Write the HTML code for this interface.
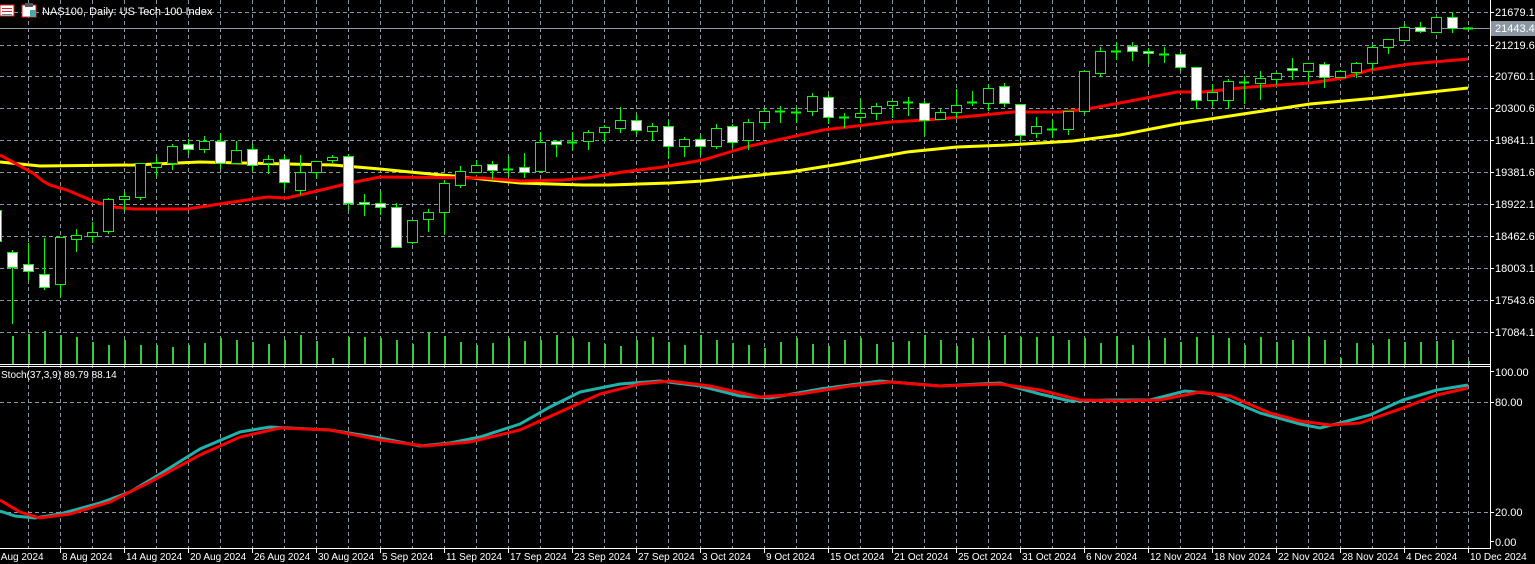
<!DOCTYPE html>
<html><head><meta charset="utf-8"><style>
html,body{margin:0;padding:0;background:#000;width:1535px;height:564px;overflow:hidden}
svg{display:block}
text{font-family:"Liberation Sans",sans-serif;font-size:11px;fill:#fff}
.d{font-size:10px}
</style></head><body>
<svg id="s" width="1535" height="564" xmlns="http://www.w3.org/2000/svg" shape-rendering="crispEdges">
<rect width="1535" height="564" fill="#000"/>
<g id="grid"></g>
<g id="vol"></g>
<line x1="0" y1="28.5" x2="1490" y2="28.5" stroke="#8c97a4" stroke-width="1"/>
<polyline id="yel" fill="none" stroke="#ffff00" stroke-width="3" shape-rendering="auto"/>
<polyline id="red" fill="none" stroke="#ff0000" stroke-width="3" shape-rendering="auto"/>
<g id="cdl"></g>
<polyline id="st1" fill="none" stroke="#20b2aa" stroke-width="3" shape-rendering="auto"/>
<polyline id="st2" fill="none" stroke="#ff0000" stroke-width="3" shape-rendering="auto"/>
<line x1="0" y1="364.5" x2="1490" y2="364.5" stroke="#fff"/>
<line x1="0" y1="366.5" x2="1490" y2="366.5" stroke="#fff"/>
<line x1="0" y1="548.5" x2="1490" y2="548.5" stroke="#fff"/>
<line x1="1490.5" y1="0" x2="1490.5" y2="549" stroke="#fff"/>
<g id="ticks" stroke="#fff"></g>
<rect x="1491" y="21" width="44" height="15" fill="#8c97a4"/>
<text x="1495" y="16">21679.1</text>
<text x="1495" y="32">21443.4</text>
<text x="1495" y="49">21219.6</text>
<text x="1495" y="80">20760.1</text>
<text x="1495" y="112">20300.6</text>
<text x="1495" y="144">19841.1</text>
<text x="1495" y="176">19381.6</text>
<text x="1495" y="208">18922.1</text>
<text x="1495" y="240">18462.6</text>
<text x="1495" y="272">18003.1</text>
<text x="1495" y="304">17543.6</text>
<text x="1495" y="336">17084.1</text>
<text x="1495" y="376">100.00</text>
<text x="1495" y="406">80.00</text>
<text x="1495" y="516">20.00</text>
<text x="1495" y="546">0.00</text>
<g class="d">
<text class="d" x="-7" y="560">2 Aug 2024</text>
<text class="d" x="62" y="560">8 Aug 2024</text>
<text class="d" x="126" y="560">14 Aug 2024</text>
<text class="d" x="190" y="560">20 Aug 2024</text>
<text class="d" x="254" y="560">26 Aug 2024</text>
<text class="d" x="318" y="560">30 Aug 2024</text>
<text class="d" x="382" y="560">5 Sep 2024</text>
<text class="d" x="446" y="560">11 Sep 2024</text>
<text class="d" x="510" y="560">17 Sep 2024</text>
<text class="d" x="574" y="560">23 Sep 2024</text>
<text class="d" x="638" y="560">27 Sep 2024</text>
<text class="d" x="702" y="560">3 Oct 2024</text>
<text class="d" x="766" y="560">9 Oct 2024</text>
<text class="d" x="830" y="560">15 Oct 2024</text>
<text class="d" x="894" y="560">21 Oct 2024</text>
<text class="d" x="958" y="560">25 Oct 2024</text>
<text class="d" x="1022" y="560">31 Oct 2024</text>
<text class="d" x="1086" y="560">6 Nov 2024</text>
<text class="d" x="1150" y="560">12 Nov 2024</text>
<text class="d" x="1214" y="560">18 Nov 2024</text>
<text class="d" x="1278" y="560">22 Nov 2024</text>
<text class="d" x="1342" y="560">28 Nov 2024</text>
<text class="d" x="1406" y="560">4 Dec 2024</text>
<text class="d" x="1470" y="560">10 Dec 2024</text>
</g>
<rect x="0" y="5" width="14" height="11" fill="#fff" stroke="#d22" stroke-width="1"/>
<line x1="2" y1="8.5" x2="12" y2="8.5" stroke="#d22"/><line x1="2" y1="11.5" x2="12" y2="11.5" stroke="#d22"/><line x1="2" y1="14.5" x2="12" y2="14.5" stroke="#399"/>
<rect x="22" y="5" width="14" height="12" fill="#fff" stroke="#d22"/>
<rect x="25" y="3" width="8" height="4" fill="#555"/>
<rect x="30" y="10" width="6" height="7" fill="#4aa"/>
<text x="42" y="15">NAS100, Daily:  US Tech 100 Index</text>
<text x="1" y="378" style="font-size:10px">Stoch(37,3,9) 89.79 88.14</text>
</svg>
<script>
var NS="http://www.w3.org/2000/svg";
function el(p,t,a){var e=document.createElementNS(NS,t);for(var k in a)e.setAttribute(k,a[k]);document.getElementById(p).appendChild(e);return e;}
var hy=[12,45,76,108,140,172,204,236,268,300,332];
hy.forEach(function(y){el('grid','line',{x1:0,x2:1490,y1:y+.5,y2:y+.5,stroke:'#8c97a4','stroke-dasharray':'4,3'});});
[402,512].forEach(function(y){el('grid','line',{x1:0,x2:1490,y1:y+.5,y2:y+.5,stroke:'#8c97a4','stroke-dasharray':'4,3'});});
for(var x=28;x<1490;x+=32){el('grid','line',{x1:x+.5,x2:x+.5,y1:0,y2:548,stroke:'#8c97a4','stroke-dasharray':'4,3'});}
hy.forEach(function(y){el('ticks','line',{x1:1490,x2:1494,y1:y+.5,y2:y+.5});});
[371,402,512,541].forEach(function(y){el('ticks','line',{x1:1490,x2:1494,y1:y+.5,y2:y+.5});});
for(var x=60;x<1490;x+=64){el('ticks','line',{x1:x+.5,x2:x+.5,y1:548,y2:553});}
var C=[[-4,210,241,205,245,1],[12,252,267,250,323,1],[28,264,271,243,279,1],[44,274,287,238,289,1],[60,237,284,237,296,0],[76,235,239,229,251,0],[92,232,236,222,242,0],[108,199,231,198,233,0],[124,196,199,192,210,0],[140,163,197,163,199,0],[156,163,167,157,176,0],[172,146,163,144,169,0],[188,144,149,139,153,1],[204,141,149,136,152,0],[220,141,163,133,168,1],[236,150,163,141,163,0],[252,149,165,144,170,1],[268,159,163,155,173,0],[284,159,182,155,188,1],[300,172,190,155,194,0],[316,161,172,161,178,0],[332,157,160,155,162,0],[348,156,203,154,209,1],[364,202,204,194,215,1],[380,203,207,191,214,1],[396,207,247,203,247,1],[412,220,242,220,243,0],[428,212,219,209,231,0],[444,183,212,180,233,0],[460,171,185,166,187,0],[476,165,172,160,172,0],[492,164,170,161,178,1],[508,169,169,156,176,0],[524,167,172,153,177,1],[540,142,171,132,171,0],[556,141,144,141,156,1],[572,142,142,132,149,0],[588,132,141,130,149,0],[604,127,132,125,141,0],[620,120,128,107,132,0],[636,120,130,114,134,1],[652,126,131,123,140,0],[668,126,146,120,158,1],[684,139,146,137,156,0],[700,139,146,135,154,1],[716,128,146,124,148,0],[732,126,142,124,147,1],[748,122,140,119,149,0],[764,111,122,108,128,0],[780,111,111,106,122,0],[796,112,112,107,122,0],[812,96,111,93,115,0],[828,97,117,95,123,1],[844,117,117,113,127,0],[860,113,117,99,122,0],[876,106,113,103,119,0],[892,101,105,101,117,0],[908,102,102,97,115,0],[924,103,120,101,135,1],[940,112,119,109,119,0],[956,105,112,89,117,0],[972,102,102,91,105,0],[988,88,103,84,110,0],[1004,86,103,83,106,1],[1020,104,135,104,140,1],[1036,126,133,117,137,0],[1052,129,129,120,137,0],[1068,111,129,111,134,0],[1084,71,111,71,113,0],[1100,51,73,47,76,0],[1116,51,51,42,59,0],[1132,46,51,42,60,1],[1148,51,53,48,63,1],[1164,54,54,47,62,0],[1180,54,67,52,70,1],[1196,67,100,67,108,1],[1212,92,100,84,105,0],[1228,81,100,79,108,0],[1244,82,82,76,103,0],[1260,78,83,71,99,0],[1276,73,79,73,84,0],[1292,68,70,58,79,1],[1308,63,71,63,81,0],[1324,64,77,62,87,1],[1340,71,77,70,77,0],[1356,63,72,62,77,0],[1372,47,63,45,69,0],[1388,39,47,39,53,0],[1404,27,40,24,40,0],[1420,27,31,22,32,1],[1436,17,32,17,32,0],[1452,17,28,12,32,1],[1468,28,28,27,29,0]];
var G='#00ff00';
C.forEach(function(c){var x=c[0];
 el('cdl','line',{x1:x+.5,x2:x+.5,y1:c[3],y2:c[4]+1,stroke:G});
 if(c[2]-c[1]<1){el('cdl','line',{x1:x-5,x2:x+5,y1:c[1]+.5,y2:c[1]+.5,stroke:G,'stroke-width':2});}
 else el('cdl','rect',{x:x-4.5,y:c[1]+.5,width:10,height:c[2]-c[1],fill:c[5]?'#fff':'#000',stroke:G});
});
var V=[336,334,331,335,337,342,345,340,345,345,347,345,343,338,340,342,344,340,335,341,358,337,337,338,340,344,333,336,342,345,343,338,341,340,335,338,342,344,346,340,337,342,345,335,340,343,345,348,342,338,344,346,340,338,344,342,341,335,340,346,338,340,335,337,337,336,340,338,343,336,345,340,338,342,337,335,338,345,337,342,340,337,340,358,343,345,339,342,342,341,340,361];
V.forEach(function(t,i){var x=12+16*i;el('vol','rect',{x:x,y:t,width:2,height:364-t,fill:'#32cd32'});});
function pl(id,p){document.getElementById(id).setAttribute('points',p.map(function(a){return a.join(',')}).join(' '));}
pl('red',[[0,155],[13,162],[33,173],[43,181],[50,185],[67,190],[93,201],[113,207],[133,209],[187,209],[200,207],[233,202],[267,197],[287,198],[317,191],[350,183],[380,177],[483,178],[520,181],[563,180],[587,178],[623,172],[663,167],[703,160],[723,154],[750,146],[823,130],[890,122],[927,120],[973,116],[1013,112],[1060,112],[1087,109],[1120,103],[1177,92],[1203,92],[1250,87],[1310,83],[1343,78],[1370,70],[1410,64],[1468,59]]);
pl('yel',[[0,162],[40,166],[133,165],[200,162],[243,163],[333,165],[380,169],[420,173],[453,176],[520,183],[583,185],[610,185],[670,183],[703,181],[750,176],[790,172],[840,164],[907,152],[957,147],[1007,145],[1073,141],[1120,135],[1177,124],[1243,114],[1310,104],[1377,98],[1468,88]]);
pl('st1',[[0,511],[15,516],[35,518],[60,514],[100,503],[130,492],[160,474],[200,449],[240,432],[270,427],[330,430],[380,438],[420,446],[450,443],[480,437],[520,424],[550,407],[580,392],[620,384],[660,381],[700,386],[740,396],[770,398],[820,389],[880,381],[940,386],[1000,383],[1040,394],[1070,401],[1110,400],[1150,400],[1185,391],[1215,394],[1260,413],[1300,424],[1320,428],[1340,423],[1370,415],[1403,400],[1437,390],[1468,385]]);
pl('st2',[[0,500],[20,512],[40,518],[70,514],[110,502],[150,482],[200,455],[240,437],[280,428],[330,430],[380,440],[425,446],[470,442],[520,430],[560,412],[600,394],[640,384],[670,381],[710,386],[760,397],[800,394],[850,386],[890,382],[940,386],[1000,384],[1040,390],[1080,400],[1120,401],[1160,400],[1200,392],[1230,396],[1270,413],[1300,421],[1330,425],[1360,423],[1403,408],[1437,395],[1468,388]]);
</script>
</body></html>
